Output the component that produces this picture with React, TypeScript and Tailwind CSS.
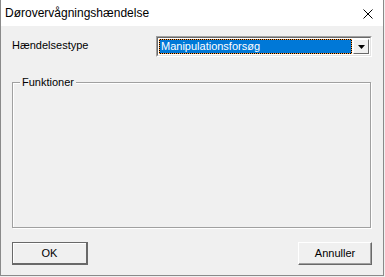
import React from "react"

const sans = "font-['Liberation_Sans',Arial,sans-serif]"

export default function App() {
    return (
        <div className={`w-[385px] h-[277px] bg-[#f0f0f0] ${sans} text-[11px] text-black overflow-hidden`}>
            <div className="w-[384px] h-[276px] flex flex-col border border-[#8a8a8a] border-t-0">
                {/* Title bar */}
                <div className="h-[26px] bg-white flex items-center justify-between pl-[4px] pr-[10px]">
                    <span className="text-[12px] leading-none">
                        Dørovervågningshændelse
                    </span>
                    <svg width="10" height="10" viewBox="0 0 10 10" className="mt-[1px]">
                        <path d="M0.5 0.5 L9.5 9.5 M9.5 0.5 L0.5 9.5" stroke="#000" strokeWidth="1" />
                    </svg>
                </div>

                <div className="flex-1 flex flex-col px-[11px] pt-[10px]">
                    {/* Event type row */}
                    <div className="flex items-start">
                        <span className="w-[144px] pt-[3px] leading-[13px]">Hændelsestype</span>
                        <div className="w-[216px] h-[21px] border border-[#a0a0a0] border-r-white border-b-white">
                            <div className="h-full border border-[#696969] border-r-[#e3e3e3] border-b-[#e3e3e3] bg-white flex items-stretch p-[1px]">
                                <div className="flex-1 bg-black">
                                    <div className="h-full border border-dotted border-[#ff9a3c] bg-[#0078d7] bg-clip-padding text-white flex items-center pl-[1px] leading-none">
                                        Manipulationsforsøg
                                    </div>
                                </div>
                                <div className="w-[16px] ml-[1px] bg-[#f0f0f0] border border-white border-r-[#696969] border-b-[#696969] flex items-center justify-center">
                                    <svg width="7" height="4" viewBox="0 0 7 4">
                                        <path d="M0 0 H7 L3.5 4 Z" fill="#000" />
                                    </svg>
                                </div>
                            </div>
                        </div>
                    </div>

                    {/* Group box */}
                    <div className="relative mt-[25px] h-[146px] mr-[1px] border border-[#a0a0a0] shadow-[1px_1px_0_#fff,inset_1px_1px_0_#fff]">
                        <span className="absolute left-[7px] -top-[7px] px-[2px] bg-[#f0f0f0] leading-[13px]">Funktioner</span>
                    </div>

                    {/* Buttons */}
                    <div className="flex justify-between mt-[14px]">
                        <button className="w-[76px] h-[23px] border border-[#696969] border-b-2 border-r-2 bg-[#f0f0f0] shadow-[inset_1px_1px_0_#fff] flex items-center justify-center leading-none">
                            OK
                        </button>
                        <button className="w-[74px] h-[23px] border border-white border-r-[#696969] border-b-[#696969] shadow-[inset_-1px_-1px_0_#a0a0a0] bg-[#f0f0f0] flex items-center justify-center leading-none">
                            Annuller
                        </button>
                    </div>
                </div>
            </div>
        </div>
    )
}
